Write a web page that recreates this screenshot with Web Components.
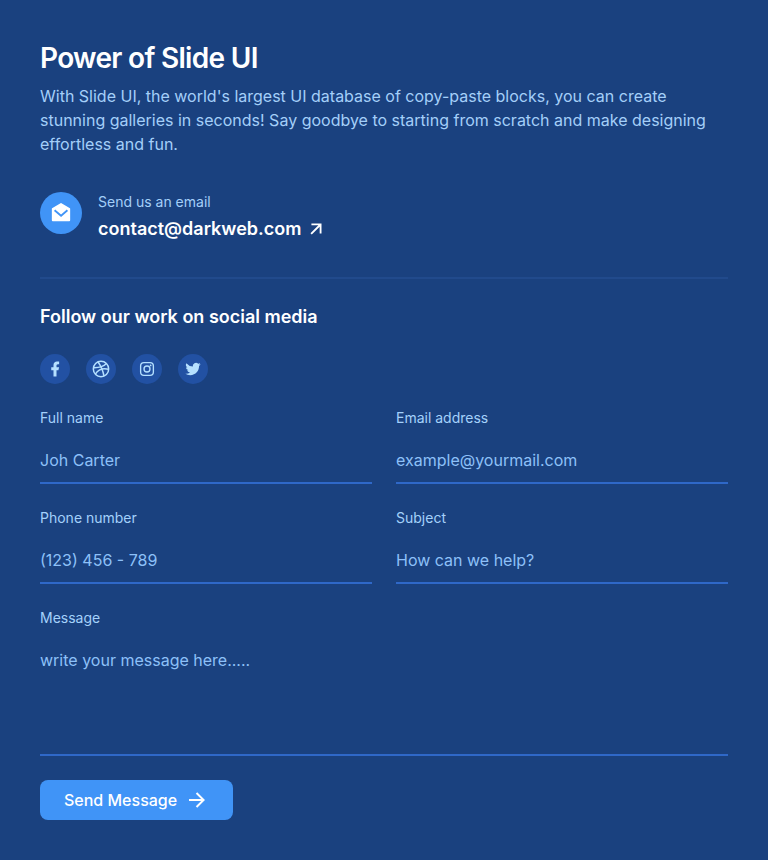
<!DOCTYPE html>
<html lang="en">
<head>
<meta charset="utf-8">
<meta name="viewport" content="width=device-width, initial-scale=1">
<title>Contact us</title>
<style>
  body {
    margin: 0;
    min-height: 100vh;
    background: #1a417f;
    font-family: Inter, "Liberation Sans", sans-serif;
    font-size: 16px;
    line-height: 24px;
    color: #a4cff9;
    --strong: #fff;
    --accent: #4094f7;
    --line: #2f68c8;
    --rule: #214a8c;
    --chip: #2251a3;
    --hint: #8dc0f8;
    --label: #a4d1fb;
  }
</style>
</head>
<body>
<contact-page>
  <page-intro heading="Power of Slide UI">With Slide UI, the world's largest UI database of copy-paste blocks, you can create stunning galleries in seconds! Say goodbye to starting from scratch and make designing effortless and fun.</page-intro>
  <email-link address="contact@darkweb.com">Send us an email</email-link>
  <social-links slot="social" heading="Follow our work on social media">
    <social-link icon="facebook" name="Facebook"></social-link>
    <social-link icon="dribbble" name="Dribbble"></social-link>
    <social-link icon="instagram" name="Instagram"></social-link>
    <social-link icon="twitter" name="Twitter"></social-link>
  </social-links>
  <contact-form slot="form">
    <form-field label="Full name" hint="Joh Carter"></form-field>
    <form-field label="Email address" type="email" hint="example@yourmail.com"></form-field>
    <form-field label="Phone number" type="tel" hint="(123) 456 - 789"></form-field>
    <form-field label="Subject" hint="How can we help?"></form-field>
    <form-field label="Message" multiline hint="write your message here....."></form-field>
    <send-button slot="action">Send Message</send-button>
  </contact-form>
</contact-page>
<script>
const ICONS = {
  mail: '<path d="M2.24 6.85 11.49 1.31a1 1 0 0 1 1.03 0l9.24 5.54a.5.5 0 0 1 .24.43V20a1 1 0 0 1-1 1H3a1 1 0 0 1-1-1V7.28a.5.5 0 0 1 .24-.43ZM18.35 8.24l-6.29 5.44-6.42-5.44-1.28 1.52 7.71 6.56 7.58-6.56Z"/>',
  upRight: '<path d="M16 9.41 7.4 18.02 5.98 16.61 14.59 8H7V6h11v11h-2Z"/>',
  right: '<path d="M16.17 11 10.81 5.64l1.41-1.42L20 12l-7.78 7.78-1.41-1.42L16.17 13H4v-2Z"/>',
  facebook: '<path d="M14 13.5h2.5l1-4H14v-2c0-1.03 0-2 2-2h1.5V2.14C17.17 2.1 15.94 2 14.64 2 11.93 2 10 3.66 10 6.7v2.8H7v4h3V22h4Z"/>',
  dribbble: '<g fill="none" stroke="currentColor" stroke-width="1.8"><circle cx="12" cy="12" r="9.2"/><path d="M8.4 3.6c3.2 4.1 5.6 9 7.2 16.8M2.8 10.4c6.9.2 12.1-1.2 15.7-4.9M5.3 18.2c3.3-5.6 8.6-7.6 15.8-5.9"/></g>',
  instagram: '<g fill="none" stroke="currentColor" stroke-width="1.8"><rect x="3.5" y="3.5" width="17" height="17" rx="4.5"/><circle cx="12" cy="12" r="4"/></g><circle cx="16.8" cy="7.2" r="1.2"/>',
  twitter: '<path d="M22.16 5.66a8.4 8.4 0 0 1-2.4.66 4.2 4.2 0 0 0 1.84-2.32c-.82.49-1.72.83-2.66 1.02a4.18 4.18 0 0 0-7.13 3.81A11.87 11.87 0 0 1 3.18 4.45a4.18 4.18 0 0 0 1.3 5.58 4.17 4.17 0 0 1-1.9-.52v.05a4.18 4.18 0 0 0 3.36 4.1 4.2 4.2 0 0 1-1.89.07 4.19 4.19 0 0 0 3.91 2.91A8.39 8.39 0 0 1 1.77 18.36a11.83 11.83 0 0 0 6.41 1.88c7.7 0 11.9-6.37 11.9-11.9 0-.18 0-.36-.01-.54a8.5 8.5 0 0 0 2.09-2.16Z"/>'
};
const SIZES = { mail: 22, upRight: 22, right: 24, facebook: 18, dribbble: 20, instagram: 18, twitter: 18 };
const icon = name => `<svg aria-hidden="true" width="${SIZES[name]}" height="${SIZES[name]}" viewBox="0 0 24 24" fill="currentColor">${ICONS[name]}</svg>`;

const define = (tag, css, html) => customElements.define(tag, class extends HTMLElement {
  connectedCallback() {
    if (this.shadowRoot) return;
    this.attachShadow({ mode: "open" }).innerHTML =
      `<style>*{box-sizing:border-box}svg{display:block;flex:none}${css}</style>${html(this)}`;
  }
});

define("contact-page", `
  :host { display: block; padding: 40px; }
  .top { display: grid; gap: 36px; padding-bottom: 36px; border-bottom: 2px solid var(--rule); }
  .rest { display: grid; gap: 20px; padding-top: 24px; }
`, () => `<main><div class="top"><slot></slot></div><div class="rest"><slot name="social"></slot><slot name="form"></slot></div></main>`);

define("page-intro", `
  :host { display: block; }
  h1 { margin: 0 0 8px; font-size: 28px; line-height: 36px; font-weight: 600; letter-spacing: -0.025em; color: var(--strong); }
  p { margin: 0; }
`, el => `<h1>${el.getAttribute("heading")}</h1><p><slot></slot></p>`);

define("email-link", `
  :host { display: flex; align-items: flex-start; gap: 16px; }
  .badge { display: grid; place-items: center; width: 42px; height: 42px; border-radius: 50%; background: var(--accent); color: var(--strong); }
  .text { display: grid; gap: 5px; }
  span { font-size: 14px; line-height: 20px; }
  a { display: flex; align-items: center; gap: 4px; font-size: 18px; line-height: 24px; font-weight: 600; color: var(--strong); text-decoration: none; }
`, el => `<div class="badge">${icon("mail")}</div><div class="text"><span><slot></slot></span><a href="mailto:${el.getAttribute("address")}">${el.getAttribute("address")}${icon("upRight")}</a></div>`);

define("social-links", `
  :host { display: block; }
  h2 { margin: 0 0 24px; font-size: 18px; line-height: 27px; font-weight: 600; color: var(--strong); }
  nav { display: flex; gap: 16px; }
`, el => `<h2>${el.getAttribute("heading")}</h2><nav aria-label="Social media"><slot></slot></nav>`);

define("social-link", `
  :host { display: block; }
  a { display: grid; place-items: center; width: 30px; height: 30px; border-radius: 50%; background: var(--chip); color: #b5e0ff; }
`, el => `<a href="#${el.getAttribute("icon")}" aria-label="${el.getAttribute("name")}">${icon(el.getAttribute("icon"))}</a>`);

define("contact-form", `
  :host { display: block; }
  .fields { display: grid; grid-template-columns: 1fr 1fr; gap: 20px 24px; margin-bottom: 24px; }
`, () => `<form><div class="fields"><slot></slot></div><slot name="action"></slot></form>`);

define("form-field", `
  :host { display: block; min-width: 0; }
  :host([multiline]) { grid-column: 1 / -1; }
  label { display: block; margin-bottom: 8px; font-size: 14px; line-height: 28px; color: var(--label); }
  input, textarea { display: block; width: 100%; margin: 0; padding: 8px 0 10px; border: 0; border-bottom: 2px solid var(--line); border-radius: 0; outline: 0; background: none; color: var(--strong); font: inherit; line-height: 24px; resize: none; }
  input { height: 44px; }
  textarea { height: 116px; }
  ::placeholder { color: var(--hint); opacity: 1; }
`, el => {
  const hint = el.getAttribute("hint");
  const control = el.hasAttribute("multiline")
    ? `<textarea id="control" placeholder="${hint}"></textarea>`
    : `<input id="control" type="${el.getAttribute("type") || "text"}" placeholder="${hint}">`;
  return `<label for="control">${el.getAttribute("label")}</label>${control}`;
});

define("send-button", `
  :host { display: block; }
  button { display: inline-flex; align-items: center; gap: 8px; padding: 8px 24px; border: 0; border-radius: 8px; background: var(--accent); color: var(--strong); font: inherit; font-weight: 500; line-height: 24px; cursor: pointer; vertical-align: top; }
`, () => `<button type="submit"><slot></slot>${icon("right")}</button>`);
</script>
</body>
</html>
